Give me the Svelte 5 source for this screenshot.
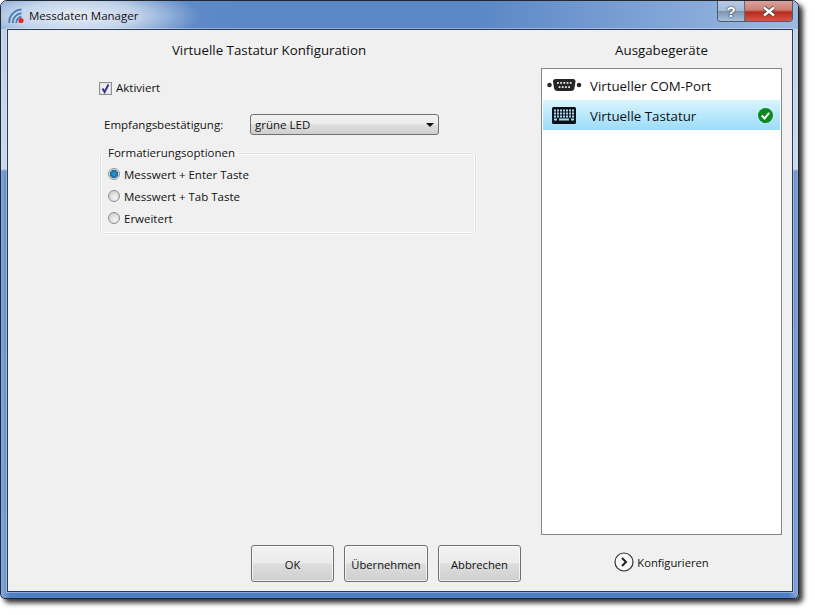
<script lang="ts">
  let enabled = $state(true);
  let format = $state('enter');
  let device = $state('keyboard');

  const formats = [
    { key: 'enter', label: 'Messwert + Enter Taste' },
    { key: 'tab', label: 'Messwert + Tab Taste' },
    { key: 'extended', label: 'Erweitert' },
  ];

  const keyRows = [0, 1, 2];
  const keyCols = [0, 1, 2, 3, 4, 5, 6];
  const pinsTop = [0, 1, 2, 3, 4];
  const pinsBottom = [0, 1, 2, 3];
</script>

<div class="window">
  <header class="titlebar">
    <div class="title">
      <svg class="app-icon" width="16" height="16" viewBox="0 0 16 16" fill="none" stroke="#4a7fb2" stroke-width="1.9">
        <path d="M1.200 15 A13 13 0 0 1 13.500 1.500" />
        <path d="M4.800 15 A9.500 9.500 0 0 1 13.500 5.200" />
        <path d="M8.300 15 A6 6 0 0 1 13.500 8.800" />
        <circle cx="13" cy="12.500" r="2.600" fill="#e8262a" stroke="none" />
      </svg>
      <span>Messdaten Manager</span>
    </div>
    <div class="caption">
      <button class="cap help" aria-label="Hilfe">?</button>
      <button class="cap close" aria-label="Schließen">
        <svg width="14" height="11" viewBox="0 0 14 11">
          <path d="M2 1.500 L12 9.500 M12 1.500 L2 9.500" stroke="#3c3c3c" stroke-width="4" />
          <path d="M2 1.500 L12 9.500 M12 1.500 L2 9.500" stroke="#fff" stroke-width="2.400" />
        </svg>
      </button>
    </div>
  </header>

  <div class="client">
    <section class="config">
      <h2>Virtuelle Tastatur Konfiguration</h2>

      <label class="check">
        <input type="checkbox" bind:checked={enabled} />
        <span class="box">
          {#if enabled}
            <svg width="11" height="11" viewBox="0 0 11 11"><path d="M2.500 5.500 L4.600 9 L8.500 1.500" fill="none" stroke="#35358f" stroke-width="2" /></svg>
          {/if}
        </span>
        Aktiviert
      </label>

      <div class="field">
        <span class="field-label">Empfangsbestätigung:</span>
        <button class="combo">
          <span>grüne LED</span>
          <span class="arrow"></span>
        </button>
      </div>

      <fieldset>
        <legend>Formatierungsoptionen</legend>
        {#each formats as f (f.key)}
          <label class="radio">
            <input type="radio" name="format" value={f.key} bind:group={format} />
            <span class="dot" class:on={format === f.key}></span>
            {f.label}
          </label>
        {/each}
      </fieldset>

      <div class="actions">
        <button class="btn">OK</button>
        <button class="btn wide">Übernehmen</button>
        <button class="btn">Abbrechen</button>
      </div>
    </section>

    <aside class="devices">
      <h2>Ausgabegeräte</h2>
      <div class="list">
        <button class="row" class:active={device === 'com'} onclick={() => (device = 'com')}>
          <span class="row-icon">
            <svg width="36" height="14" viewBox="0 0 36 14">
              <circle cx="3.500" cy="7" r="2.300" fill="#2b2b2b" />
              <circle cx="33" cy="7" r="2.300" fill="#2b2b2b" />
              <path d="M9.500 1 H27 Q29.500 1 29.500 3.500 L28.500 10 Q28 13 25 13 H11.500 Q8.500 13 8 10 L7 3.500 Q7 1 9.500 1 Z" fill="#262626" />
              <g fill="#e4e4e4">
                {#each pinsTop as p}
                  <rect x={11 + p * 3.200} y="4" width="1.800" height="1.800" />
                {/each}
                {#each pinsBottom as p}
                  <rect x={12.600 + p * 3.200} y="8.200" width="1.800" height="1.800" />
                {/each}
              </g>
            </svg>
          </span>
          <span class="row-label">Virtueller COM-Port</span>
        </button>
        <button class="row" class:active={device === 'keyboard'} onclick={() => (device = 'keyboard')}>
          <span class="row-icon">
            <svg width="24" height="17" viewBox="0 0 24 17">
              <rect width="24" height="17" rx="1.500" fill="#0a1018" />
              <g fill="#a8dcf2">
                {#each keyRows as r}
                  {#each keyCols as c}
                    <rect x={2 + c * 3} y={2.500 + r * 3} width="2" height="2" />
                  {/each}
                {/each}
                <rect x="7" y="11.500" width="10" height="2" />
                <rect x="2" y="11.500" width="3" height="2" />
                <rect x="19" y="11.500" width="3" height="2" />
              </g>
            </svg>
          </span>
          <span class="row-label">Virtuelle Tastatur</span>
          {#if device === 'keyboard'}
            <svg class="ok" width="15" height="15" viewBox="0 0 15 15">
              <circle cx="7.500" cy="7.500" r="7.500" fill="#0a8a1e" />
              <path d="M3.800 7.500 L6.500 10.500 L11.200 4.800" fill="none" stroke="#fff" stroke-width="2" />
            </svg>
          {/if}
        </button>
      </div>
      <button class="configure">
        <svg width="20" height="20" viewBox="0 0 20 20">
          <circle cx="10" cy="10" r="9" fill="#fafafa" stroke="#333" stroke-width="1.200" />
          <path d="M8 6 L12 10 L8 14" fill="none" stroke="#222" stroke-width="2" />
        </svg>
        Konfigurieren
      </button>
    </aside>
  </div>
</div>

<style>
  :global(body) {
    margin: 0;
    min-height: 615px;
    background: #fff;
  }

  .window {
    width: 799px;
    height: 599px;
    box-sizing: border-box;
    display: flex;
    flex-direction: column;
    padding: 0 5px 6px 6px;
    border: 1px solid #23272e;
    border-radius: 7px 7px 5px 5px;
    background:
      linear-gradient(to right, rgba(255, 255, 255, 0.35), rgba(255, 255, 255, 0) 1.2%, rgba(255, 255, 255, 0) 98.8%, rgba(255, 255, 255, 0.35)),
      linear-gradient(to bottom, #a9c0e0 0, #b9cde8 168px, #4577bf 170px, #4d7fc6 100%);
    box-shadow: 4px 4px 5px rgba(0, 0, 0, 0.8);
    font-family: "Open Sans", "Liberation Sans", sans-serif;
    font-size: 11.5px;
    color: #111;
  }

  .titlebar {
    height: 28px;
    flex: none;
    margin: 0 -5px 0 -6px;
    padding: 0 5px 0 7px;
    display: flex;
    justify-content: space-between;
    border-radius: 6px 6px 0 0;
    background:
      radial-gradient(ellipse 125px 30px at 75px 15px, rgba(255, 255, 255, 0.85), rgba(255, 255, 255, 0.6) 50%, rgba(255, 255, 255, 0) 100%),
      linear-gradient(to right, #6a94cc 0, #5b87c7 30%, #5b87c7 60%, #8fb0dc 92%, #9dbae0 100%);
  }

  .title {
    display: flex;
    align-items: center;
    gap: 5px;
    padding-top: 1px;
  }

  .app-icon {
    display: block;
  }

  .caption {
    display: flex;
    height: 20px;
    border: 1px solid #4a5a70;
    border-top: none;
    border-radius: 0 0 4px 4px;
    overflow: hidden;
  }

  .cap {
    border: none;
    padding: 0;
    margin: 0;
    display: flex;
    align-items: center;
    justify-content: center;
    font-family: "Liberation Sans", sans-serif;
  }

  .help {
    width: 27px;
    border-right: 1px solid #5a6a80;
    background: linear-gradient(to bottom, #b7cae2 0, #a4bbd8 48%, #7d94b4 52%, #a9bfdb 100%);
    color: #fff;
    font-size: 15px;
    font-weight: 700;
    text-shadow: 0 0 2px #333, 0 0 1px #333;
  }

  .close {
    width: 47px;
    background: linear-gradient(to bottom, #d9a39c 0, #cf7f74 45%, #b8291c 55%, #cf5a4a 100%);
  }

  .client {
    flex: 1;
    min-height: 0;
    display: flex;
    background: #f0f0f0;
    border: 1px solid #2b3a55;
    box-shadow: 0 0 0 1px rgba(255, 255, 255, 0.35);
  }

  h2 {
    margin: 0;
    font-size: 13.300px;
    font-weight: 400;
    text-align: center;
    line-height: 18px;
  }

  .config {
    width: 522px;
    flex: none;
    display: flex;
    flex-direction: column;
    padding-top: 11px;
    box-sizing: border-box;
  }

  input[type='checkbox'],
  input[type='radio'] {
    position: absolute;
    opacity: 0;
    width: 0;
    height: 0;
    margin: 0;
  }

  .check {
    display: flex;
    align-items: center;
    gap: 4px;
    margin: 22px 0 0 91px;
    height: 14px;
    line-height: 14px;
  }

  .box {
    width: 11px;
    height: 11px;
    border: 1px solid #8e8f8f;
    box-shadow: inset 0 0 0 1px #dfe0e6;
    background: #eeeef2;
    display: block;
  }

  .box svg {
    display: block;
  }

  .field {
    display: flex;
    align-items: center;
    margin: 19px 0 0 96px;
  }

  .field-label {
    width: 146px;
  }

  .combo {
    width: 189px;
    height: 21px;
    box-sizing: border-box;
    display: flex;
    align-items: center;
    justify-content: space-between;
    padding: 0 4px 0 4px;
    border: 1px solid #707070;
    border-radius: 3px;
    background: linear-gradient(to bottom, #f2f2f2 0, #ebebeb 48%, #dddddd 52%, #cfcfcf 100%);
    font: inherit;
    color: inherit;
  }

  .arrow {
    width: 0;
    height: 0;
    border-left: 4px solid transparent;
    border-right: 4px solid transparent;
    border-top: 4px solid #111;
  }

  fieldset {
    margin: 10px 0 0 92px;
    width: 376px;
    box-sizing: border-box;
    padding: 2px 0 4px 7px;
    border: 1px solid #d5dfe5;
    border-radius: 3px;
    box-shadow: inset 0 0 0 1px #fff, 0 0 0 0.5px #fff;
    display: flex;
    flex-direction: column;
  }

  legend {
    padding: 0 3px 0 0;
    line-height: 16px;
  }

  .radio {
    display: flex;
    align-items: center;
    gap: 4px;
    height: 22px;
  }

  .dot {
    width: 12px;
    height: 12px;
    box-sizing: border-box;
    border-radius: 50%;
    border: 1px solid #8e8f8f;
    background: radial-gradient(circle at 60% 65%, #f6f6f6, #c4c4c4);
    display: block;
  }

  .dot.on {
    background: radial-gradient(circle at 50% 50%, #3aa3d0 0, #0f6aa0 55%, #d8dde2 62%, #f4f4f4 100%);
  }

  .actions {
    margin-top: auto;
    margin-bottom: 9px;
    margin-left: 243px;
    display: flex;
    gap: 10px;
  }

  .btn {
    width: 83px;
    height: 37px;
    padding: 2px 0 0;
    border: 1px solid #707070;
    border-radius: 3px;
    background: linear-gradient(to bottom, #f2f2f2 0, #ebebeb 48%, #dddddd 52%, #cfcfcf 100%);
    font: inherit;
    font-size: 11.200px;
    color: inherit;
    box-shadow: inset 0 0 0 1px rgba(255, 255, 255, 0.7);
  }

  .btn.wide {
    width: 84px;
  }

  .devices {
    width: 241px;
    flex: none;
    margin-left: 11px;
    display: flex;
    flex-direction: column;
    padding-top: 11px;
  }

  .list {
    height: 467px;
    box-sizing: border-box;
    margin-top: 9px;
    padding: 1px;
    border: 1px solid #828790;
    background: #fff;
    display: flex;
    flex-direction: column;
  }

  .row {
    height: 30px;
    flex: none;
    display: flex;
    align-items: center;
    padding: 0 7px 0 2px;
    border: none;
    background: transparent;
    font: inherit;
    font-size: 13.300px;
    color: inherit;
    text-align: left;
  }

  .row.active {
    background: linear-gradient(to bottom, #d9f4ff, #9bdcf8);
  }

  .row-icon {
    width: 38px;
    flex: none;
    display: flex;
    justify-content: center;
    margin-right: 7px;
  }

  .row-label {
    flex: 1;
    padding-top: 2px;
  }

  .configure {
    align-self: center;
    margin-top: 17px;
    padding: 0;
    border: none;
    background: none;
    display: flex;
    align-items: center;
    gap: 3px;
    font: inherit;
    font-size: 11.200px;
    color: inherit;
  }
</style>
